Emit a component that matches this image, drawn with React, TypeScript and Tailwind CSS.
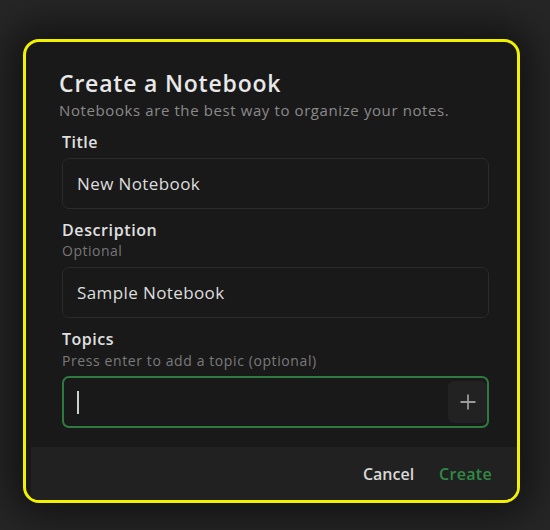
import React from "react";

export default function App() {
  const font = { fontFamily: '"Open Sans", "Noto Sans", sans-serif' };
  return (
    <div
      className="w-[550px] h-[530px] bg-[#262626] pt-[39px] pl-[23px] overflow-hidden"
      style={font}
    >
      <div className="w-[497px] h-[464px] border-[3px] border-[#f2f200] rounded-[16px] bg-[#191919] shadow-[0_0_40px_12px_rgba(0,0,0,0.55)] flex flex-col overflow-hidden">
        <div className="pt-[27px] pl-[33px] pr-[28px] flex flex-col">
          <h1 className="text-[23px] leading-[28px] font-semibold tracking-[0.8px] text-[#e8e8e8]">
            Create a Notebook
          </h1>
          <p className="mt-[3px] text-[15px] leading-[20px] tracking-[0.6px] text-[#8a8a8a]">
            Notebooks are the best way to organize your notes.
          </p>
          <div className="pl-[3px] flex flex-col">
            <label className="mt-[11px] text-[16px] leading-[22px] font-semibold tracking-[0.5px] text-[#e0e0e0]">
              Title
            </label>
            <div className="mt-[5px] h-[51px] rounded-[7px] border border-[#2b2b2b] bg-[#191919] flex items-center pl-[14px] text-[17px] tracking-[0.4px] text-[#dedede]">
              New Notebook
            </div>
            <label className="mt-[10px] text-[16px] leading-[22px] font-semibold tracking-[0.6px] text-[#e0e0e0]">
              Description
            </label>
            <span className="mt-[1px] text-[14px] leading-[18px] tracking-[0.5px] text-[#767676]">
              Optional
            </span>
            <div className="mt-[7px] h-[51px] rounded-[7px] border border-[#2b2b2b] bg-[#191919] flex items-center pl-[14px] text-[17px] tracking-[0.4px] text-[#dedede]">
              Sample Notebook
            </div>
            <label className="mt-[10px] text-[16px] leading-[22px] font-semibold tracking-[0.5px] text-[#e0e0e0]">
              Topics
            </label>
            <span className="mt-[2px] text-[14px] leading-[18px] text-[#7a7a7a] tracking-[0.6px]">
              Press enter to add a topic (optional)
            </span>
            <div className="mt-[6px] h-[52px] rounded-[7px] border-2 border-[#2f7a41] bg-[#191919] flex items-center justify-between pl-[13px] pr-0">
              <div className="w-[2px] h-[23px] bg-[#cfcfcf]" />
              <div className="w-[39px] h-[42px] rounded-[6px] bg-[#222222] flex items-center justify-center">
                <svg width="18" height="18" viewBox="0 0 18 18">
                  <path d="M9 1.5V16.5M1.5 9H16.5" stroke="#9a9a9a" strokeWidth="1.8" />
                </svg>
              </div>
            </div>
          </div>
        </div>
        <div className="mt-auto ml-[5px] h-[53px] bg-[#212121] flex items-center justify-end gap-[25px] pr-[25px] text-[16px] font-semibold">
          <span className="text-[#d8d8d8]">Cancel</span>
          <span className="text-[#2f8a45] tracking-[0.3px]">Create</span>
        </div>
      </div>
    </div>
  );
}
